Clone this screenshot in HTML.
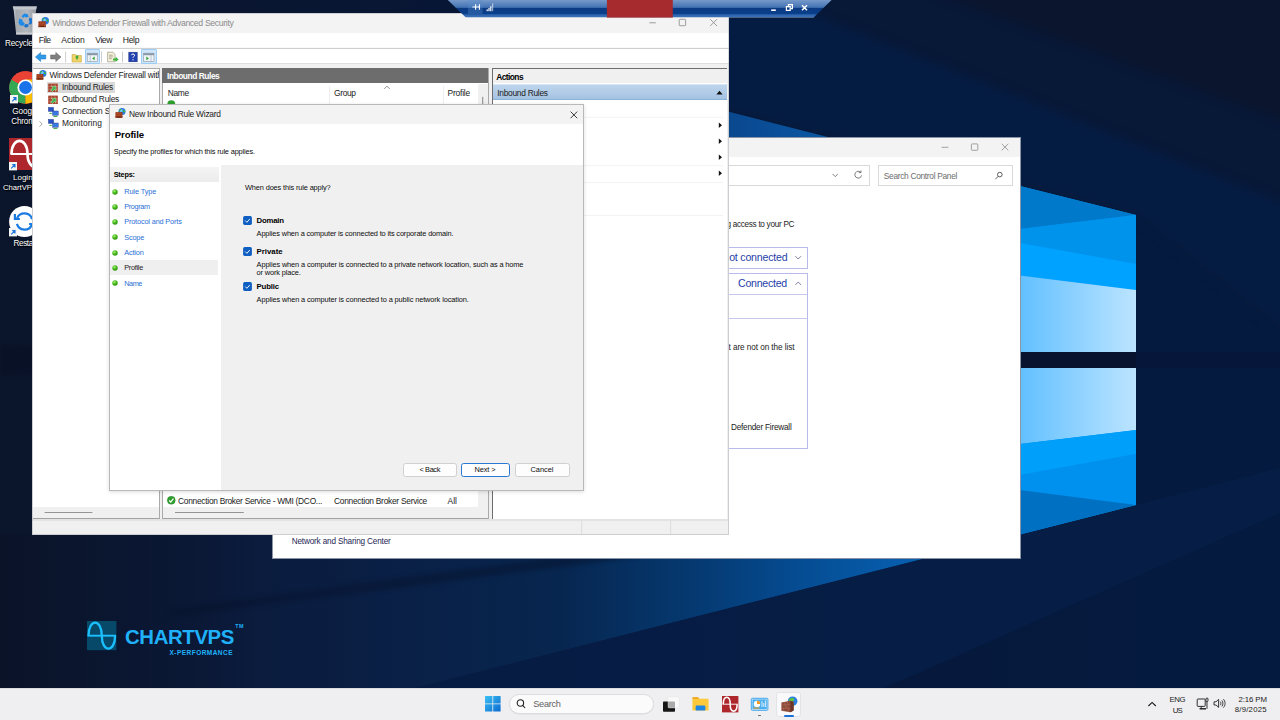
<!DOCTYPE html>
<html lang="en"><head><meta charset="utf-8"><title>Windows Defender Firewall - New Inbound Rule Wizard</title>
<style>
html,body{margin:0;padding:0}
body{width:1280px;height:720px;overflow:hidden;position:relative;background:#071633;font-family:"Liberation Sans",sans-serif}
.t{position:absolute;white-space:nowrap;line-height:1;display:block}
.r{position:absolute;box-sizing:border-box}
svg{position:absolute;overflow:visible}
</style></head>
<body>
<svg width="1280" height="720" viewBox="0 0 1280 720" style="left:0;top:0">
<defs>
<linearGradient id="wbase" x1="0" y1="0" x2="1280" y2="0" gradientUnits="userSpaceOnUse"><stop offset="0" stop-color="#0b152b"/><stop offset="0.5" stop-color="#07173a"/><stop offset="1" stop-color="#041b3f"/></linearGradient>
<linearGradient id="wbeam" x1="200" y1="0" x2="1020" y2="0" gradientUnits="userSpaceOnUse"><stop offset="0" stop-color="#0b1a3a"/><stop offset="0.25" stop-color="#0a2046"/><stop offset="0.44" stop-color="#07264f"/><stop offset="0.61" stop-color="#053a72"/><stop offset="0.73" stop-color="#054c92"/><stop offset="0.86" stop-color="#075eae"/><stop offset="1" stop-color="#0a6cc2"/></linearGradient>
<linearGradient id="wbeam2" x1="560" y1="0" x2="1020" y2="0" gradientUnits="userSpaceOnUse"><stop offset="0" stop-color="#07295a"/><stop offset="0.4" stop-color="#0a4a92"/><stop offset="1" stop-color="#0a74c8"/></linearGradient>
<filter id="wblur" x="-10%" y="-10%" width="120%" height="120%" color-interpolation-filters="sRGB"><feGaussianBlur stdDeviation="5"/></filter>
<filter id="wblur2" x="-20%" y="-30%" width="140%" height="160%" color-interpolation-filters="sRGB"><feGaussianBlur stdDeviation="2"/></filter>
<linearGradient id="wpane" x1="1020" y1="0" x2="1136" y2="0" gradientUnits="userSpaceOnUse"><stop offset="0" stop-color="#62c0ff"/><stop offset="0.5" stop-color="#8fd2ff"/><stop offset="1" stop-color="#bce4ff"/></linearGradient>
</defs>
<rect width="1280" height="720" fill="url(#wbase)"/>
<polygon points="728,0 1280,0 1280,330 1136,215 728,111" fill="#081837"/>
<g filter="url(#wblur)"><polygon points="700,-10 753,-10 1300,209 1300,346 1136,215 700,104" fill="#051c42"/>
<polygon points="928,-10 1300,-10 1300,126" fill="#0b152d"/></g>
<polygon points="1136,352 1280,352 1280,368 1136,368" fill="#06163a"/>

<rect x="0" y="345" width="40" height="30" fill="#070d1f" opacity="0.4" filter="url(#wblur2)"/>
<polygon points="0,534 1021,534 0,793.6" fill="url(#wbeam)"/>
<linearGradient id="wfade" x1="0" y1="0" x2="260" y2="0" gradientUnits="userSpaceOnUse"><stop offset="0" stop-color="#0a1226" stop-opacity="0.9"/><stop offset="1" stop-color="#0a1226" stop-opacity="0"/></linearGradient><rect x="0" y="534" width="260" height="160" fill="url(#wfade)"/>
<polygon points="640,546 640,557 170,617 170,609" fill="#06122c" opacity="0.45" filter="url(#wblur2)"/>
<polygon points="1136,505 1280,468 1280,513 812,720 290,720" fill="#071f48" opacity="0.7"/>
<polygon points="560,68.6 1020,186 1020,300 560,300" fill="url(#wbeam2)"/>
<polygon points="1019,185.7 1136,215 1136,505 1019,534.8" fill="#0096f0"/>
<polygon points="1020,186 1136,215 1020,229" fill="#0079cb"/>
<polygon points="1020,229 1136,215 1136,264 1020,243" fill="#0093ec"/>
<polygon points="1020,243 1136,264 1136,290 1020,275.5" fill="#00a2ff"/>
<polygon points="1020,275.5 1136,290 1136,352 1020,352" fill="url(#wpane)"/>
<rect x="1020" y="352" width="116" height="16" fill="#07132f"/>
<polygon points="1020,368 1136,368 1136,430 1020,444" fill="url(#wpane)"/>
<polygon points="1020,444 1136,430 1136,454 1020,475" fill="#009ff9"/>
<polygon points="1020,475 1136,454 1136,505 1020,490" fill="#0091ee"/>
<polygon points="1020,490 1136,505 1020,534.5" fill="#0070c2"/>
</svg>
<svg style="left:11.4px;top:5px" width="28" height="32" viewBox="0 0 28 32">
<defs><linearGradient id="rb" x1="0" y1="0" x2="1" y2="0"><stop offset="0" stop-color="#c6cace"/><stop offset="0.12" stop-color="#a4a9b0"/><stop offset="0.6" stop-color="#b4b8be"/><stop offset="1" stop-color="#9299a2"/></linearGradient></defs>
<polygon points="2.600,4 25.200,4 22.400,29.500 5.200,29.500" fill="url(#rb)"/>
<polygon points="1.700,1.300 26,1.300 25.300,4.400 2.400,4.400" fill="#c3c7cc"/>
<polygon points="5,27.600 22.600,27.600 22.400,29.500 5.200,29.500" fill="#c9ccd0"/>
<g fill="#1f8ae8"><path d="M10.600 11.200l2.600-2.600 3.200.4 1.400 2.400-2.600 1.400-1.600-1.200-1.400 1.400z"/><path d="M18.600 12.400l2.600 1 .8 3.200-1.800 2.600-3.200.2 1.600-2.200-.8-2.400z" fill="#1a74d0"/><path d="M8.400 13.600l2.800.8.400 2.200 2.200 1.800-1.600 2.600-3.400-.8-1.400-3z"/><path d="M14 19l3 .2.600 2.400-2.600 1.200-2-1.400z" fill="#1a74d0"/></g>
</svg>
<svg style="left:9px;top:71px" width="33" height="33" viewBox="-16.5 -16.5 33 33">
<circle r="16.2" fill="#ea4335"/>
<path d="M0 0L-14.03 -8.1A16.2 16.2 0 0 0 0 16.2z" fill="#34a853"/>
<path d="M0 0L0 16.2A16.2 16.2 0 0 0 14.03 -8.1z" fill="#fbbc04"/>
<path d="M0 0L-14.03 -8.1A16.2 16.2 0 0 1 14.03 -8.1z" fill="#ea4335"/>
<path d="M0 -8.1H14.03A16.2 16.2 0 0 1 7 14.6L0 8.1z" fill="#fbbc04"/>
<circle r="8.1" fill="#fff"/><circle r="6.4" fill="#1a73e8"/>
</svg>
<svg style="left:10px;top:94.8px" width="8" height="8.4" viewBox="0 0 8 8.4"><rect width="8" height="8.4" fill="#f4f4f4"/><path d="M2.2 6.4L5.6 3M3.2 2.6h2.8v2.8" stroke="#1a73d8" stroke-width="1.1" fill="none"/></svg>
<svg style="left:9.400px;top:138px" width="37" height="32" viewBox="0 0 37 32"><rect width="37" height="32" fill="#ad272c"/>
<path d="M1.500 16H35.500" stroke="#fff" stroke-width="1.800"/><path d="M2.500 16C2.500 -1.500 18.500 -1.500 18.500 16S34.500 33.500 34.500 16" stroke="#fff" stroke-width="2.600" fill="none"/></svg>
<svg style="left:9.4px;top:161.8px" width="8" height="8.4" viewBox="0 0 8 8.4"><rect width="8" height="8.4" fill="#f4f4f4"/><path d="M2.2 6.4L5.6 3M3.2 2.6h2.8v2.8" stroke="#1a73d8" stroke-width="1.1" fill="none"/></svg>
<svg style="left:9.4px;top:205.6px" width="31" height="31" viewBox="-15.5 -15.5 31 31"><circle r="15.4" fill="#fff"/>
<path d="M-7.4 -3.2A8 8 0 0 1 7.6 -2.4M7.4 3.2A8 8 0 0 1 -7.6 2.4" stroke="#1a7be0" stroke-width="2.2" fill="none"/>
<path d="M-9.6 -7.5v5h5" stroke="#1a7be0" stroke-width="2.2" fill="none"/><path d="M9.6 7.5v-5h-5" stroke="#1a7be0" stroke-width="2.2" fill="none"/></svg>
<svg style="left:9.4px;top:228.4px" width="8" height="8.4" viewBox="0 0 8 8.4"><rect width="8" height="8.4" fill="#f4f4f4"/><path d="M2.2 6.4L5.6 3M3.2 2.6h2.8v2.8" stroke="#1a73d8" stroke-width="1.1" fill="none"/></svg>
<svg style="left:87.2px;top:621px" width="29.4" height="29.2" viewBox="0 0 29.4 29.2"><rect width="29.4" height="29.2" fill="#064969"/>
<path d="M0.600 14.700H29" stroke="#1cc0ff" stroke-width="1.900"/><path d="M1.500 14.700C1.500 -2.600 14.800 -2.600 14.800 14.700S28.100 32 28.100 14.700" stroke="#1cc0ff" stroke-width="2.300" fill="none"/></svg>
<span class="t" style="left:5.00px;top:40px;font-size:8.2px;color:#fff;letter-spacing:-0.203px;text-shadow:0 0 2px #000,0.5px 0.5px 1px #000;">Recycle Bin</span>
<span class="t" style="left:12.30px;top:108px;font-size:8.2px;color:#fff;letter-spacing:-0.118px;text-shadow:0 0 2px #000,0.5px 0.5px 1px #000;">Google</span>
<span class="t" style="left:11.20px;top:118px;font-size:8.2px;color:#fff;letter-spacing:-0.187px;text-shadow:0 0 2px #000,0.5px 0.5px 1px #000;">Chrome</span>
<span class="t" style="left:13.00px;top:174px;font-size:8px;color:#fff;letter-spacing:0.000px;text-shadow:0 0 2px #000,0.5px 0.5px 1px #000;">Login to</span>
<span class="t" style="left:2.90px;top:184px;font-size:7.7px;color:#fff;letter-spacing:0.000px;text-shadow:0 0 2px #000,0.5px 0.5px 1px #000;">ChartVPS.com</span>
<span class="t" style="left:13.50px;top:240px;font-size:8.2px;color:#fff;letter-spacing:-0.413px;text-shadow:0 0 2px #000,0.5px 0.5px 1px #000;">Restart</span>
<span class="t" style="left:125.00px;top:627px;font-size:20.4px;font-weight:700;color:#1fb2fb;letter-spacing:-0.396px;">CHARTVPS</span>
<span class="t" style="left:235.30px;top:624px;font-size:5.4px;font-weight:700;color:#1fb2fb;letter-spacing:0.352px;">TM</span>
<span class="t" style="left:169.50px;top:650px;font-size:6.5px;font-weight:700;color:#1fb2fb;letter-spacing:0.468px;">X-PERFORMANCE</span>
<div class="r" style="left:272px;top:137px;width:748.8px;height:421.8px;background:#fff;"></div>
<div class="r" style="left:272px;top:137px;width:748.8px;height:20px;background:#f3f3f3;"></div>
<svg style="left:930px;top:137px" width="90" height="20" viewBox="0 0 90 20" fill="none" stroke="#8a8a8a" stroke-width="0.8"><path d="M11.6 10.3h6.8"/><rect x="41.4" y="6.9" width="6.4" height="6.4" rx="0.8"/><path d="M71.7 6.8l6.6 6.6M78.3 6.8l-6.6 6.6"/></svg>
<div class="r" style="left:300px;top:164.5px;width:569.5px;height:21.8px;background:#fff;border:0.7px solid #d9d9d9;"></div>
<div class="r" style="left:878px;top:164.5px;width:134.5px;height:21.8px;background:#fff;border:0.7px solid #d9d9d9;"></div>
<svg style="left:826px;top:166px" width="44" height="18" viewBox="0 0 44 18" fill="none" stroke="#5a5a5a" stroke-width="0.8"><path d="M6.6 8l2.6 2.6L11.8 8"/><path d="M34.6 6.2A3.4 3.4 0 1 0 35.6 9.4"/><path d="M35 4.4v2.2h-2.2" /></svg>
<svg style="left:993px;top:170px" width="12" height="12" viewBox="0 0 12 12" fill="none" stroke="#4a4a4a" stroke-width="0.9"><circle cx="6.8" cy="4.6" r="2.3"/><path d="M5.2 6.3L2.4 9.2"/></svg>
<div class="r" style="left:500px;top:247.4px;width:308px;height:21.3px;background:#fff;border:0.8px solid #b9b9ea;"></div>
<div class="r" style="left:500px;top:273.4px;width:308px;height:175.4px;background:#fff;border:0.8px solid #b9b9ea;"></div>
<svg style="left:500px;top:294px" width="307" height="1"><rect x="0.00" y="0.00" width="307" height="0.8" fill="#b9b9ea"/></svg>
<svg style="left:500px;top:318px" width="307" height="1"><rect x="0.00" y="0.00" width="307" height="0.8" fill="#b9b9ea"/></svg>
<svg style="left:792px;top:250px" width="12" height="42" viewBox="0 0 12 42" fill="none" stroke="#5a5a8a" stroke-width="0.8"><path d="M3.4 6.2L6.2 9l2.8-2.8"/><path d="M3.4 34.8l2.8-2.8L9 34.8"/></svg>
<div class="r" style="left:272px;top:137px;width:748.8px;height:421.8px;background:transparent;border:0.7px solid #8a94a6;"></div>
<span class="t" style="left:883.80px;top:172px;font-size:8.4px;color:#6d6d6d;letter-spacing:-0.320px;">Search Control Panel</span>
<span class="t" style="left:726.40px;top:221px;font-size:8.2px;color:#1b1b1b;letter-spacing:-0.288px;">g access to your PC</span>
<span class="t" style="left:721.70px;top:252px;font-size:10.6px;color:#1f3ea8;letter-spacing:-0.202px;">Not connected</span>
<span class="t" style="left:738.00px;top:278px;font-size:10.6px;color:#1f3ea8;letter-spacing:-0.250px;">Connected</span>
<span class="t" style="left:728.50px;top:344px;font-size:8.2px;color:#1b1b1b;letter-spacing:-0.065px;">t are not on the list</span>
<span class="t" style="left:731.00px;top:424px;font-size:8.2px;color:#1b1b1b;letter-spacing:-0.216px;">Defender Firewall</span>
<span class="t" style="left:291.70px;top:538px;font-size:8.2px;color:#1e1e55;letter-spacing:-0.170px;">Network and Sharing Center</span>
<div class="r" style="left:32px;top:13px;width:696.6px;height:521.6px;background:#f0f0f0;"></div>
<div class="r" style="left:32px;top:13px;width:696.6px;height:20px;background:#f3f3f3;"></div>
<div class="r" style="left:32px;top:33px;width:696.6px;height:14.6px;background:#fff;"></div>
<div class="r" style="left:32px;top:48px;width:696.6px;height:15.3px;background:#fff;"></div>
<svg style="left:32px;top:47px" width="697" height="2"><rect x="0.00" y="0.90" width="696.6" height="0.9" fill="#c4c4c4"/></svg>
<svg style="left:32px;top:63px" width="697" height="1"><rect x="0.00" y="0.10" width="696.6" height="0.8" fill="#dadada"/></svg>
<svg style="left:37.7px;top:17.2px" width="11.5" height="10.5" viewBox="0 0 11.5 10.5">
<circle cx="7.300" cy="3.700" r="3.700" fill="#2a78e4"/><circle cx="6.600" cy="2.900" r="1.500" fill="#7fe0ff" opacity="0.800"/><path d="M4.200 3.200c.300-1.200 1.400-2.200 2.400-2.400.200.800-.600 1.400-1.200 1.800-.500.400-.600 1-.900 1.400zM8.800 2.200c1 .200 1.600 1 1.800 2-.600.600-1.600.400-2-.400-.300-.600-.200-1.200.200-1.600z" fill="#3fc024"/>
<rect x="0.500" y="4.300" width="7.200" height="5.800" fill="#983616"/><rect x="0.500" y="8.600" width="7.200" height="1.500" fill="#6e2008"/><path d="M0.500 6.200h7.200M0.500 8.100h7.200M2.800 4.300v1.900M5.400 4.300v1.900M4.100 6.200v1.900M1.700 8.100v2M6.500 8.100v2" stroke="#c8704e" stroke-width="0.400" fill="none"/>
</svg>
<svg style="left:640px;top:12.9px" width="88" height="19.5" viewBox="0 0 88 19.5" fill="none" stroke="#858585" stroke-width="0.8"><path d="M9.4 9.8h6.4"/><rect x="39.2" y="6.3" width="6.4" height="6.4" rx="0.8"/><path d="M70.2 6.2l6.8 6.8M77 6.2l-6.8 6.8"/></svg>
<div class="r" style="left:84.6px;top:49.4px;width:15.5px;height:14.2px;background:#cfe6fa;border:0.7px solid #9ccdf5;border-radius:1px;"></div>
<div class="r" style="left:141px;top:49.4px;width:16px;height:14.2px;background:#cfe6fa;border:0.7px solid #9ccdf5;border-radius:1px;"></div>
<svg style="left:32px;top:48px" width="130" height="17" viewBox="0 0 130 17">
<path d="M3.4 9L8.6 4.4v2.6h5.2v4H8.6v2.6z" fill="#2e9be8" stroke="#1a6fc0" stroke-width="0.5"/>
<path d="M29 9L23.800 4.400v2.600h-5.200v4h5.200v2.600z" fill="#7f7f7f" stroke="#5f5f5f" stroke-width="0.500"/>
<path d="M33.6 3.5v11M69.5 3.5v11M90.5 3.5v11" stroke="#b8b8b8" stroke-width="0.7"/>
<path d="M40 6.5h3.4l1 1h5v6.6H40z" fill="#f0d36a" stroke="#b89a2e" stroke-width="0.5"/><path d="M43 9.6l2-2.6 2 2.6h-1.2v2h-1.6v-2z" fill="#3aa83a"/>
<rect x="55.2" y="5.2" width="10.4" height="8.4" fill="#eef3f8" stroke="#8a97a6" stroke-width="0.6"/><rect x="55.2" y="5.2" width="10.4" height="2" fill="#8a97a6"/><path d="M58.2 7.2v6.4" stroke="#8a97a6" stroke-width="0.5"/><path d="M62.6 8.6v3.6l-2.4-1.8z" fill="#2ea32e"/>
<path d="M75.600 4.200h5.400l2 2v7.600H75.600z" fill="#f6f1da" stroke="#8f8a74" stroke-width="0.600"/><path d="M77 7.200h3.800M77 8.900h3.800M77 10.600h2.800" stroke="#7d7a6c" stroke-width="0.600"/><path d="M81 10.4h2.6V8.8l3 2.6-3 2.6v-1.6H81z" fill="#3cb43c"/>
<rect x="96.800" y="4.200" width="8.400" height="9.600" fill="#2242b0" stroke="#16287c" stroke-width="0.500"/><path d="M99.4 7.2c0-1.6 3.2-1.6 3.2 0 0 1.2-1.6 1.2-1.6 2.6M101 11.2v1.2" stroke="#fff" stroke-width="1" fill="none"/>
<rect x="111.6" y="5.2" width="10.4" height="8.4" fill="#eef3f8" stroke="#8a97a6" stroke-width="0.6"/><rect x="111.6" y="5.2" width="10.4" height="2" fill="#8a97a6"/><path d="M119 7.2v6.4" stroke="#8a97a6" stroke-width="0.5"/><path d="M114.4 8.6v3.6l2.4-1.8z" fill="#2ea32e"/>
</svg>
<div class="r" style="left:32.6px;top:68px;width:127.2px;height:451.4px;background:#fff;border:0.8px solid #a9a9a9;border-left:none;border-bottom:1.4px solid #a3a3a3;"></div>
<div class="r" style="left:33px;top:507.2px;width:126px;height:11.2px;background:#f0f0f0;"></div>
<svg style="left:44px;top:512px" width="49" height="1"><rect x="0.60" y="0.00" width="47.8" height="0.9" fill="#8a8a8a"/></svg>
<div class="r" style="left:47px;top:81.8px;width:68px;height:11px;background:#d9d9d9;"></div>
<svg style="left:36px;top:70.4px" width="10.924999999999999" height="9.975" viewBox="0 0 11.5 10.5">
<circle cx="7.300" cy="3.700" r="3.700" fill="#2a78e4"/><circle cx="6.600" cy="2.900" r="1.500" fill="#7fe0ff" opacity="0.800"/><path d="M4.200 3.200c.300-1.200 1.400-2.200 2.400-2.400.200.800-.600 1.400-1.200 1.800-.500.400-.600 1-.900 1.400zM8.800 2.200c1 .200 1.600 1 1.800 2-.600.600-1.600.400-2-.400-.300-.600-.200-1.200.200-1.600z" fill="#3fc024"/>
<rect x="0.500" y="4.300" width="7.200" height="5.800" fill="#983616"/><rect x="0.500" y="8.600" width="7.200" height="1.500" fill="#6e2008"/><path d="M0.500 6.200h7.200M0.500 8.100h7.200M2.800 4.300v1.900M5.400 4.300v1.900M4.100 6.200v1.900M1.700 8.100v2M6.500 8.100v2" stroke="#c8704e" stroke-width="0.400" fill="none"/>
</svg>
<svg style="left:48px;top:82.5px" width="11" height="10" viewBox="0 0 11 10"><rect x="0.2" y="0.6" width="9.6" height="8.4" fill="#a8442e"/><path d="M0.2 3.4h9.6M0.2 6.2h9.6M3.4 0.6v2.8M7 0.6v2.8M5 3.4v2.8M2.4 6.2V9M7.6 6.2V9" stroke="#d69a86" stroke-width="0.45"/><path d="M3.4 3.2h4.6v4.6l-1.5-1.4L4.4 8.6 2.8 7l2.1-2.2z" fill="#39b54a" stroke="#e8ffe8" stroke-width="0.4"/></svg>
<svg style="left:48px;top:94.5px" width="11" height="10" viewBox="0 0 11 10"><rect x="0.2" y="0.6" width="9.6" height="8.4" fill="#a8442e"/><path d="M0.2 3.4h9.6M0.2 6.2h9.6M3.4 0.6v2.8M7 0.6v2.8M5 3.4v2.8M2.4 6.2V9M7.6 6.2V9" stroke="#d69a86" stroke-width="0.45"/><path d="M3.4 3.2h4.6v4.6l-1.5-1.4L4.4 8.6 2.8 7l2.1-2.2z" fill="#39b54a" stroke="#e8ffe8" stroke-width="0.4"/></svg>
<svg style="left:48px;top:106.5px" width="11" height="10" viewBox="0 0 11 10"><rect x="0.4" y="0.4" width="5.2" height="4" fill="#2a52c8" stroke="#17307a" stroke-width="0.4"/><rect x="4.6" y="4" width="5.6" height="4.2" fill="#3a7ae0" stroke="#17307a" stroke-width="0.4"/><path d="M1.4 6.4h2.4M5.4 9.4h4" stroke="#3aa83a" stroke-width="1"/></svg>
<svg style="left:48px;top:118.5px" width="11" height="10" viewBox="0 0 11 10"><rect x="0.4" y="0.4" width="5.2" height="4" fill="#2a52c8" stroke="#17307a" stroke-width="0.4"/><rect x="4.6" y="4" width="5.6" height="4.2" fill="#3a7ae0" stroke="#17307a" stroke-width="0.4"/><path d="M1.4 6.4h2.4M5.4 9.4h4" stroke="#3aa83a" stroke-width="1"/></svg>
<svg style="left:38px;top:119.5px" width="6" height="8" viewBox="0 0 6 8" fill="none" stroke="#8a8a8a" stroke-width="0.8"><path d="M1.6 1.4L4.2 4 1.6 6.6"/></svg>
<div class="r" style="left:162px;top:68px;width:327.4px;height:451.4px;background:#fff;border:0.8px solid #a9a9a9;border-bottom:1.4px solid #a3a3a3;"></div>
<div class="r" style="left:162.4px;top:68.4px;width:326px;height:14.6px;background:#6d6d6d;"></div>
<svg style="left:329px;top:86px" width="1" height="18"><rect x="0.20" y="0.00" width="0.6" height="18" fill="#e3e3e3"/></svg>
<svg style="left:443px;top:86px" width="1" height="18"><rect x="0.00" y="0.00" width="0.6" height="18" fill="#e3e3e3"/></svg>
<div class="r" style="left:477.5px;top:84px;width:10.8px;height:434px;background:#f0f0f0;"></div>
<svg style="left:482px;top:96px" width="2" height="13"><rect x="0.30" y="0.80" width="0.9" height="12" fill="#7a7a7a"/></svg>
<svg style="left:383px;top:84.5px" width="8" height="5" viewBox="0 0 8 5" fill="none" stroke="#6a6a6a" stroke-width="0.7"><path d="M1.2 3.8L4 1.2l2.8 2.6"/></svg>
<div class="r" style="left:163px;top:507.2px;width:314.5px;height:11.2px;background:#f0f0f0;"></div>
<svg style="left:175px;top:512px" width="69" height="1"><rect x="0.00" y="0.00" width="68.8" height="0.9" fill="#8a8a8a"/></svg>
<svg style="left:166.8px;top:495.8px" width="8.6" height="8.6" viewBox="0 0 10 10"><circle cx="5" cy="5" r="4.6" fill="#2fa02f" stroke="#1d7a1d" stroke-width="0.5"/><path d="M2.6 5.2l1.8 1.9L7.5 3" stroke="#fff" stroke-width="1.4" fill="none"/></svg>
<svg style="left:166.8px;top:100px" width="8.6" height="8.6" viewBox="0 0 10 10"><circle cx="5" cy="5" r="4.6" fill="#2fa02f"/></svg>
<div class="r" style="left:491.6px;top:68px;width:235.6px;height:451px;background:#fff;border-top:1.6px solid #6d6d6d;border-left:1.6px solid #6d6d6d;"></div>
<div class="r" style="left:493px;top:69.4px;width:234.2px;height:13.6px;background:#f0f0f0;"></div>
<div class="r" style="left:493px;top:83.6px;width:234.2px;height:16.6px;background:linear-gradient(#bdd4ec,#b3cde8 50%,#a3c1e2);border-top:0.6px solid #d6e4f3;border-bottom:0.7px solid #8fb2d8;"></div>
<svg style="left:714.5px;top:88.6px" width="9" height="7" viewBox="0 0 9 7"><path d="M1.4 5.4L4.5 1.8l3.1 3.6z" fill="#111"/></svg>
<svg style="left:497px;top:116px" width="226" height="2"><rect x="0.00" y="0.90" width="226" height="0.6" fill="#ececec"/></svg>
<svg style="left:497px;top:165px" width="226" height="2"><rect x="0.00" y="0.50" width="226" height="0.6" fill="#ececec"/></svg>
<svg style="left:497px;top:182px" width="226" height="1"><rect x="0.00" y="0.00" width="226" height="0.6" fill="#ececec"/></svg>
<svg style="left:497px;top:215px" width="226" height="1"><rect x="0.00" y="0.00" width="226" height="0.6" fill="#ececec"/></svg>
<svg style="left:717.5px;top:121.8px" width="5" height="6.4" viewBox="0 0 5 6.4"><path d="M0.8 0.4L4 3.2 0.8 6z" fill="#111"/></svg>
<svg style="left:717.5px;top:137.8px" width="5" height="6.4" viewBox="0 0 5 6.4"><path d="M0.8 0.4L4 3.2 0.8 6z" fill="#111"/></svg>
<svg style="left:717.5px;top:153.8px" width="5" height="6.4" viewBox="0 0 5 6.4"><path d="M0.8 0.4L4 3.2 0.8 6z" fill="#111"/></svg>
<svg style="left:717.5px;top:170.20000000000002px" width="5" height="6.4" viewBox="0 0 5 6.4"><path d="M0.8 0.4L4 3.2 0.8 6z" fill="#111"/></svg>
<svg style="left:32px;top:519px" width="697" height="2"><rect x="0.00" y="0.60" width="696.6" height="0.8" fill="#d0d0d0"/></svg>
<svg style="left:581px;top:520px" width="2" height="15"><rect x="0.40" y="0.40" width="0.7" height="13.8" fill="#d4d4d4"/></svg>
<svg style="left:670px;top:520px" width="2" height="15"><rect x="0.40" y="0.40" width="0.7" height="13.8" fill="#d4d4d4"/></svg>
<div class="r" style="left:32px;top:13px;width:696.6px;height:521.6px;background:transparent;border:0.7px solid rgba(125,130,142,0.3);"></div>
<span class="t" style="left:52.20px;top:19px;font-size:8.7px;color:#8c8c8c;letter-spacing:-0.347px;">Windows Defender Firewall with Advanced Security</span>
<span class="t" style="left:38.80px;top:36px;font-size:8.6px;color:#1b1b1b;letter-spacing:-0.515px;">File</span>
<span class="t" style="left:61.30px;top:36px;font-size:8.6px;color:#1b1b1b;letter-spacing:-0.098px;">Action</span>
<span class="t" style="left:95.30px;top:36px;font-size:8.6px;color:#1b1b1b;letter-spacing:-0.471px;">View</span>
<span class="t" style="left:122.80px;top:36px;font-size:8.6px;color:#1b1b1b;letter-spacing:-0.347px;">Help</span>
<span class="t" style="left:49.40px;top:71px;font-size:8.4px;color:#1b1b1b;letter-spacing:-0.229px;width:109.3px;overflow:hidden;">Windows Defender Firewall with</span>
<span class="t" style="left:62.00px;top:83px;font-size:8.4px;color:#1b1b1b;letter-spacing:-0.232px;">Inbound Rules</span>
<span class="t" style="left:62.00px;top:95px;font-size:8.4px;color:#1b1b1b;letter-spacing:-0.252px;">Outbound Rules</span>
<span class="t" style="left:62.00px;top:107px;font-size:8.4px;color:#1b1b1b;letter-spacing:-0.188px;">Connection Security Rules</span>
<span class="t" style="left:62.00px;top:119px;font-size:8.4px;color:#1b1b1b;letter-spacing:0.089px;">Monitoring</span>
<span class="t" style="left:167.00px;top:72px;font-size:8.4px;font-weight:700;color:#fff;letter-spacing:-0.450px;">Inbound Rules</span>
<span class="t" style="left:167.70px;top:89px;font-size:8.4px;color:#1b1b1b;letter-spacing:-0.311px;">Name</span>
<span class="t" style="left:334.00px;top:89px;font-size:8.4px;color:#1b1b1b;letter-spacing:-0.336px;">Group</span>
<span class="t" style="left:447.50px;top:89px;font-size:8.4px;color:#1b1b1b;letter-spacing:-0.179px;">Profile</span>
<span class="t" style="left:496.30px;top:73px;font-size:8.4px;font-weight:700;color:#000;letter-spacing:-0.574px;">Actions</span>
<span class="t" style="left:497.20px;top:89px;font-size:8.4px;color:#1b1b1b;letter-spacing:-0.263px;">Inbound Rules</span>
<span class="t" style="left:178.10px;top:497px;font-size:8.4px;color:#1b1b1b;letter-spacing:-0.284px;">Connection Broker Service - WMI (DCO...</span>
<span class="t" style="left:334.00px;top:497px;font-size:8.4px;color:#1b1b1b;letter-spacing:-0.265px;">Connection Broker Service</span>
<span class="t" style="left:447.50px;top:497px;font-size:8.4px;color:#1b1b1b;letter-spacing:0.062px;">All</span>
<div class="r" style="left:109.2px;top:104.2px;width:475.3px;height:386.5px;background:#f0f0f0;box-shadow:0 1px 4px rgba(0,0,0,0.14);"></div>
<div class="r" style="left:109.2px;top:104.2px;width:475.3px;height:20px;background:#f3f3f3;"></div>
<div class="r" style="left:109.2px;top:124.2px;width:475.3px;height:40.6px;background:#fff;"></div>
<svg style="left:115px;top:108.4px" width="11.04" height="10.08" viewBox="0 0 11.5 10.5">
<circle cx="7.300" cy="3.700" r="3.700" fill="#2a78e4"/><circle cx="6.600" cy="2.900" r="1.500" fill="#7fe0ff" opacity="0.800"/><path d="M4.200 3.200c.300-1.200 1.400-2.200 2.400-2.400.200.800-.600 1.400-1.200 1.800-.500.400-.600 1-.900 1.400zM8.800 2.200c1 .200 1.600 1 1.800 2-.600.600-1.600.400-2-.400-.300-.600-.200-1.200.200-1.600z" fill="#3fc024"/>
<rect x="0.500" y="4.300" width="7.200" height="5.800" fill="#983616"/><rect x="0.500" y="8.600" width="7.200" height="1.500" fill="#6e2008"/><path d="M0.500 6.200h7.200M0.500 8.100h7.200M2.800 4.300v1.900M5.400 4.300v1.900M4.100 6.200v1.900M1.700 8.100v2M6.500 8.100v2" stroke="#c8704e" stroke-width="0.400" fill="none"/>
</svg>
<svg style="left:568px;top:108.6px" width="12" height="12" viewBox="0 0 12 12" fill="none" stroke="#1a1a1a" stroke-width="0.85"><path d="M2.6 2.6l6.6 6.6M9.2 2.6L2.6 9.2"/></svg>
<div class="r" style="left:109.2px;top:164.8px;width:111.4px;height:325.9px;background:#fff;"></div>
<div class="r" style="left:109.2px;top:167px;width:109.4px;height:15px;background:linear-gradient(#f4f4f4,#ececec);"></div>
<div class="r" style="left:110px;top:260.3px;width:108.4px;height:14.8px;background:#efefef;"></div>
<svg style="left:111.7px;top:188.5px" width="6" height="6" viewBox="0 0 6 6"><defs><radialGradient id="gb0" cx="0.38" cy="0.32" r="0.7"><stop offset="0" stop-color="#b6f08a"/><stop offset="0.45" stop-color="#4cc21e"/><stop offset="1" stop-color="#2f8f10"/></radialGradient></defs><circle cx="3" cy="3" r="2.7" fill="url(#gb0)"/></svg>
<svg style="left:111.7px;top:203.83px" width="6" height="6" viewBox="0 0 6 6"><defs><radialGradient id="gb1" cx="0.38" cy="0.32" r="0.7"><stop offset="0" stop-color="#b6f08a"/><stop offset="0.45" stop-color="#4cc21e"/><stop offset="1" stop-color="#2f8f10"/></radialGradient></defs><circle cx="3" cy="3" r="2.7" fill="url(#gb1)"/></svg>
<svg style="left:111.7px;top:219.16px" width="6" height="6" viewBox="0 0 6 6"><defs><radialGradient id="gb2" cx="0.38" cy="0.32" r="0.7"><stop offset="0" stop-color="#b6f08a"/><stop offset="0.45" stop-color="#4cc21e"/><stop offset="1" stop-color="#2f8f10"/></radialGradient></defs><circle cx="3" cy="3" r="2.7" fill="url(#gb2)"/></svg>
<svg style="left:111.7px;top:234.49px" width="6" height="6" viewBox="0 0 6 6"><defs><radialGradient id="gb3" cx="0.38" cy="0.32" r="0.7"><stop offset="0" stop-color="#b6f08a"/><stop offset="0.45" stop-color="#4cc21e"/><stop offset="1" stop-color="#2f8f10"/></radialGradient></defs><circle cx="3" cy="3" r="2.7" fill="url(#gb3)"/></svg>
<svg style="left:111.7px;top:249.82px" width="6" height="6" viewBox="0 0 6 6"><defs><radialGradient id="gb4" cx="0.38" cy="0.32" r="0.7"><stop offset="0" stop-color="#b6f08a"/><stop offset="0.45" stop-color="#4cc21e"/><stop offset="1" stop-color="#2f8f10"/></radialGradient></defs><circle cx="3" cy="3" r="2.7" fill="url(#gb4)"/></svg>
<svg style="left:111.7px;top:265.15px" width="6" height="6" viewBox="0 0 6 6"><defs><radialGradient id="gb5" cx="0.38" cy="0.32" r="0.7"><stop offset="0" stop-color="#b6f08a"/><stop offset="0.45" stop-color="#4cc21e"/><stop offset="1" stop-color="#2f8f10"/></radialGradient></defs><circle cx="3" cy="3" r="2.7" fill="url(#gb5)"/></svg>
<svg style="left:111.7px;top:280.48px" width="6" height="6" viewBox="0 0 6 6"><defs><radialGradient id="gb6" cx="0.38" cy="0.32" r="0.7"><stop offset="0" stop-color="#b6f08a"/><stop offset="0.45" stop-color="#4cc21e"/><stop offset="1" stop-color="#2f8f10"/></radialGradient></defs><circle cx="3" cy="3" r="2.7" fill="url(#gb6)"/></svg>
<svg style="left:243.2px;top:215.8px" width="9" height="9" viewBox="0 0 9 9"><rect x="0.1" y="0.1" width="8.8" height="8.8" rx="1.6" fill="#0f5fc2"/><path d="M2.3 4.6l1.6 1.7 2.9-3.3" stroke="#fff" stroke-width="0.9" fill="none"/></svg>
<svg style="left:243.2px;top:246.7px" width="9" height="9" viewBox="0 0 9 9"><rect x="0.1" y="0.1" width="8.8" height="8.8" rx="1.6" fill="#0f5fc2"/><path d="M2.3 4.6l1.6 1.7 2.9-3.3" stroke="#fff" stroke-width="0.9" fill="none"/></svg>
<svg style="left:243.2px;top:282px" width="9" height="9" viewBox="0 0 9 9"><rect x="0.1" y="0.1" width="8.8" height="8.8" rx="1.6" fill="#0f5fc2"/><path d="M2.3 4.6l1.6 1.7 2.9-3.3" stroke="#fff" stroke-width="0.9" fill="none"/></svg>
<div class="r" style="left:402.5px;top:463px;width:54.4px;height:13.7px;background:#fdfdfd;border:0.7px solid #d0d0d0;border-radius:2.6px;"></div>
<div class="r" style="left:460.6px;top:463px;width:49px;height:13.7px;background:#fdfdfd;border:1px solid #2a78d2;border-radius:2.6px;"></div>
<div class="r" style="left:514.6px;top:463px;width:55.2px;height:13.7px;background:#fdfdfd;border:0.7px solid #d0d0d0;border-radius:2.6px;"></div>
<div class="r" style="left:109.2px;top:104.2px;width:475.3px;height:386.5px;background:transparent;border:0.7px solid #b9b9b9;"></div>
<span class="t" style="left:129.00px;top:110px;font-size:8.4px;color:#1b1b1b;letter-spacing:-0.243px;">New Inbound Rule Wizard</span>
<span class="t" style="left:114.80px;top:130px;font-size:9.6px;font-weight:700;color:#000;letter-spacing:-0.094px;">Profile</span>
<span class="t" style="left:113.70px;top:148px;font-size:7.4px;color:#0c0c0c;letter-spacing:-0.172px;">Specify the profiles for which this rule applies.</span>
<span class="t" style="left:113.70px;top:171px;font-size:7.3px;font-weight:700;color:#000;letter-spacing:-0.202px;">Steps:</span>
<span class="t" style="left:124.20px;top:188px;font-size:7.3px;color:#2a6fd6;letter-spacing:-0.082px;">Rule Type</span>
<span class="t" style="left:124.20px;top:203px;font-size:7.3px;color:#2a6fd6;letter-spacing:-0.355px;">Program</span>
<span class="t" style="left:124.20px;top:218px;font-size:7.3px;color:#2a6fd6;letter-spacing:-0.141px;">Protocol and Ports</span>
<span class="t" style="left:124.20px;top:234px;font-size:7.3px;color:#2a6fd6;letter-spacing:-0.141px;">Scope</span>
<span class="t" style="left:124.20px;top:249px;font-size:7.3px;color:#2a6fd6;letter-spacing:-0.130px;">Action</span>
<span class="t" style="left:124.20px;top:264px;font-size:7.3px;color:#1b1b1b;letter-spacing:-0.270px;">Profile</span>
<span class="t" style="left:124.20px;top:280px;font-size:7.3px;color:#2a6fd6;letter-spacing:-0.417px;">Name</span>
<span class="t" style="left:245.00px;top:184px;font-size:7.4px;color:#0c0c0c;letter-spacing:-0.137px;">When does this rule apply?</span>
<span class="t" style="left:256.60px;top:217px;font-size:7.8px;font-weight:700;color:#000;letter-spacing:-0.249px;">Domain</span>
<span class="t" style="left:256.60px;top:230px;font-size:7.4px;color:#0c0c0c;letter-spacing:-0.148px;">Applies when a computer is connected to its corporate domain.</span>
<span class="t" style="left:256.60px;top:248px;font-size:7.8px;font-weight:700;color:#000;letter-spacing:-0.002px;">Private</span>
<span class="t" style="left:256.60px;top:261px;font-size:7.4px;color:#0c0c0c;letter-spacing:-0.124px;">Applies when a computer is connected to a private network location, such as a home</span>
<span class="t" style="left:256.60px;top:269px;font-size:7.4px;color:#0c0c0c;letter-spacing:-0.144px;">or work place.</span>
<span class="t" style="left:256.60px;top:283px;font-size:7.8px;font-weight:700;color:#000;letter-spacing:-0.201px;">Public</span>
<span class="t" style="left:256.60px;top:296px;font-size:7.4px;color:#0c0c0c;letter-spacing:-0.118px;">Applies when a computer is connected to a public network location.</span>
<span class="t" style="left:419.50px;top:466px;font-size:7.4px;color:#0c0c0c;letter-spacing:-0.385px;">&lt; Back</span>
<span class="t" style="left:474.50px;top:466px;font-size:7.4px;color:#0c0c0c;letter-spacing:-0.096px;">Next &gt;</span>
<span class="t" style="left:530.50px;top:466px;font-size:7.4px;color:#0c0c0c;letter-spacing:-0.003px;">Cancel</span>
<svg style="left:440px;top:0" width="400" height="19" viewBox="440 0 400 19">
<defs><linearGradient id="rg" x1="0" y1="0" x2="0" y2="1"><stop offset="0" stop-color="#7699ca"/><stop offset="0.42" stop-color="#4373b4"/><stop offset="0.46" stop-color="#0a3a82"/><stop offset="0.78" stop-color="#0a3f8a"/><stop offset="0.84" stop-color="#2c64ae"/><stop offset="0.96" stop-color="#3a70b6"/><stop offset="1" stop-color="#9ab4d6"/></linearGradient></defs>
<polygon points="447.8,0 831.6,0 813.6,17.6 465.8,17.6" fill="url(#rg)"/>
<rect x="468" y="0" width="14.5" height="14" fill="#5a8ccc" opacity="0.35"/>
<rect x="606.9" y="0" width="65.9" height="17.6" fill="#a62b2e"/>
<g stroke="#fff" fill="none" stroke-width="1.1"><path d="M472.4 7h3M475.6 4.2v5.6M479.4 4.2v5.6M475.6 7h3.8"/></g>
<g fill="#fff"><rect x="486.6" y="9.4" width="1.2" height="1.8"/><rect x="488.4" y="8" width="1.2" height="3.2"/><rect x="490.2" y="6.2" width="1.2" height="5"/><rect x="492" y="3.4" width="1.2" height="7.8" opacity="0.55"/></g>
<g stroke="#fff" fill="none" stroke-width="1.2"><path d="M771.2 10.2h4.6" stroke-width="1.6"/><rect x="786.4" y="6.6" width="3.8" height="3.8"/><path d="M788.4 6.4V4.6h4v4h-2"/><path d="M802 5.2l5 5M807 5.2l-5 5" stroke-width="1.5"/></g>
</svg>
<div class="r" style="left:0px;top:688.2px;width:1280px;height:31.8px;background:#efeff1;border-top:0.6px solid #dcdcde;"></div>
<svg style="left:484.5px;top:696.4px" width="15.6" height="15.6" viewBox="0 0 15.6 15.6"><defs><linearGradient id="sg" x1="0" y1="0" x2="1" y2="1"><stop offset="0" stop-color="#3cc0f4"/><stop offset="1" stop-color="#0a6ad0"/></linearGradient></defs><path d="M0 0h7.4v7.4H0zM8.2 0h7.4v7.4H8.2zM0 8.2h7.4v7.4H0zM8.2 8.2h7.4v7.4H8.2z" fill="url(#sg)"/></svg>
<div class="r" style="left:509.4px;top:693.6px;width:145px;height:20.6px;background:#fbfbfc;border:0.7px solid #dcdde0;border-radius:10.3px;box-shadow:0 0.5px 0.5px rgba(0,0,0,0.08);"></div>
<svg style="left:515px;top:698px" width="12" height="12" viewBox="0 0 12 12" fill="none" stroke="#222" stroke-width="1.1"><circle cx="5.4" cy="5" r="3.2"/><path d="M7.7 7.4l2.4 2.6"/></svg>
<svg style="left:662px;top:695.5px" width="18" height="17" viewBox="0 0 18 17"><rect x="1" y="5.400" width="12" height="10.400" rx="0.800" fill="#151515"/><rect x="6" y="1" width="11" height="10.900" rx="1" fill="#ffffff" fill-opacity="0.640"/><rect x="6" y="1" width="11" height="10.900" rx="1" fill="none" stroke="#e4e4e4" stroke-width="0.400"/></svg>
<svg style="left:692.4px;top:696.4px" width="17" height="15" viewBox="0 0 17 15"><path d="M0.4 2.4c0-.8.4-1.2 1.2-1.2h4.2l1.6 1.6h8c.8 0 1.2.4 1.2 1.2v9.4c0 .8-.4 1.2-1.2 1.2H1.6c-.8 0-1.2-.4-1.2-1.2z" fill="#ffc93e"/><path d="M0.4 2.4c0-.8.4-1.2 1.2-1.2h4.2l1.6 1.6H0.4z" fill="#e8a21c"/><rect x="3.6" y="9.6" width="9.8" height="5" rx="1.2" fill="#1f86e4"/></svg>
<svg style="left:721.9px;top:695.7px" width="16.4" height="16.4" viewBox="0 0 32 32"><rect width="32" height="32" fill="#ad272c"/><path d="M1 16H31" stroke="#fff" stroke-width="1.8"/><path d="M2.500 16C2.500 -2 16 -2 16 16S29.500 34 29.500 16" stroke="#fff" stroke-width="3" fill="none"/></svg>
<svg style="left:750.6px;top:697.6px" width="17.2" height="12.6" viewBox="0 0 17.2 12.6"><rect x="0.3" y="0.3" width="16.6" height="12" rx="1" fill="#dff0fc" stroke="#2f9be8" stroke-width="0.9"/><rect x="1.4" y="1.4" width="14.4" height="9.8" fill="#49aef0"/><circle cx="6" cy="6" r="3.2" fill="#fff"/><path d="M6 6V2.8A3.2 3.2 0 0 1 9.2 6z" fill="#f39a1e"/><path d="M11 3v6M12.8 5v4M14.4 2.6v6.4" stroke="#e8f5ff" stroke-width="0.9"/><rect x="2.4" y="9.6" width="6" height="1" fill="#f39a1e"/></svg>
<div class="r" style="left:757.8px;top:715px;width:3.4px;height:1.3px;background:#6a6a6a;border-radius:0.7px;"></div>
<div class="r" style="left:776.3px;top:691.5px;width:24.8px;height:25.3px;background:#f9f9fb;border:0.6px solid #e2e3e6;border-radius:2.6px;"></div>
<svg style="left:780.6px;top:695.6px" width="17" height="16.6" viewBox="0 0 17 16.6"><circle cx="11.6" cy="5.2" r="4.8" fill="#2b7fe0"/><path d="M8 3.4c1.4-1.6 3.6-2 5-.8.8.8.2 2-.9 2.4-1 .4-.8 1.8.4 2.3.9.5.6 1.8-.6 2.4-2.2.4-3.9-.9-4.4-2.8z" fill="#5cc43e"/><path d="M0.4 6.4l9-1.6 3.2 1.2v8.600l-3.200 1.600-9-1.400z" fill="#8e4a38"/><path d="M9.400 4.800l3.200 1.200v8.600l-3.200 1.600z" fill="#6d3527"/><path d="M0.400 9.200l9-.6M0.400 12l9 .2M3.400 5.900v3.100M6.600 5.300v3.400M5 8.900v3.200M2.400 12.100v3M7.200 12.200v3.600" stroke="#b9806e" stroke-width="0.4"/></svg>
<div class="r" style="left:783.6px;top:714.7px;width:10.2px;height:1.9px;background:#1a6fd8;border-radius:1px;"></div>
<svg style="left:1146px;top:698px" width="12" height="12" viewBox="0 0 12 12" fill="none" stroke="#1a1a1a" stroke-width="1.1"><path d="M2.400 8l3.700-3.600L9.800 8"/></svg>
<svg style="left:1196px;top:697px" width="14" height="13.6" viewBox="0 0 14 13.6" fill="none" stroke="#1a1a1a" stroke-width="0.9"><rect x="1.200" y="2" width="8" height="7.400" rx="0.800"/><path d="M3.600 11.800h6.400" stroke-width="1.400"/><path d="M5.200 9.400v2.200"/><rect x="10" y="1" width="2" height="3.600" rx="1" fill="#efeff1"/><path d="M11 4.600v7.200"/></svg>
<svg style="left:1212.600px;top:698.400px" width="13" height="11" viewBox="0 0 13 11" fill="none" stroke="#1a1a1a" stroke-width="0.85"><path d="M1 3.800h2l2.600-2.400v8L3 7H1z"/><path d="M7.200 3.600c.9.900.9 2.700 0 3.600M8.800 2.400c1.500 1.500 1.500 4.500 0 6M10.400 1.200c2.200 2.200 2.200 6.200 0 8.400"/></svg>
<span class="t" style="left:533.30px;top:700px;font-size:9.2px;color:#5f5f5f;letter-spacing:-0.304px;">Search</span>
<span class="t" style="left:1169.60px;top:696px;font-size:7.8px;color:#1a1a1a;letter-spacing:-0.502px;">ENG</span>
<span class="t" style="left:1172.80px;top:707px;font-size:7.8px;color:#1a1a1a;letter-spacing:-0.822px;">US</span>
<span class="t" style="left:1238.40px;top:696px;font-size:7.8px;color:#1a1a1a;letter-spacing:-0.078px;">2:16 PM</span>
<span class="t" style="left:1234.70px;top:706px;font-size:7.8px;color:#1a1a1a;letter-spacing:0.230px;">8/9/2025</span>
</body></html>
